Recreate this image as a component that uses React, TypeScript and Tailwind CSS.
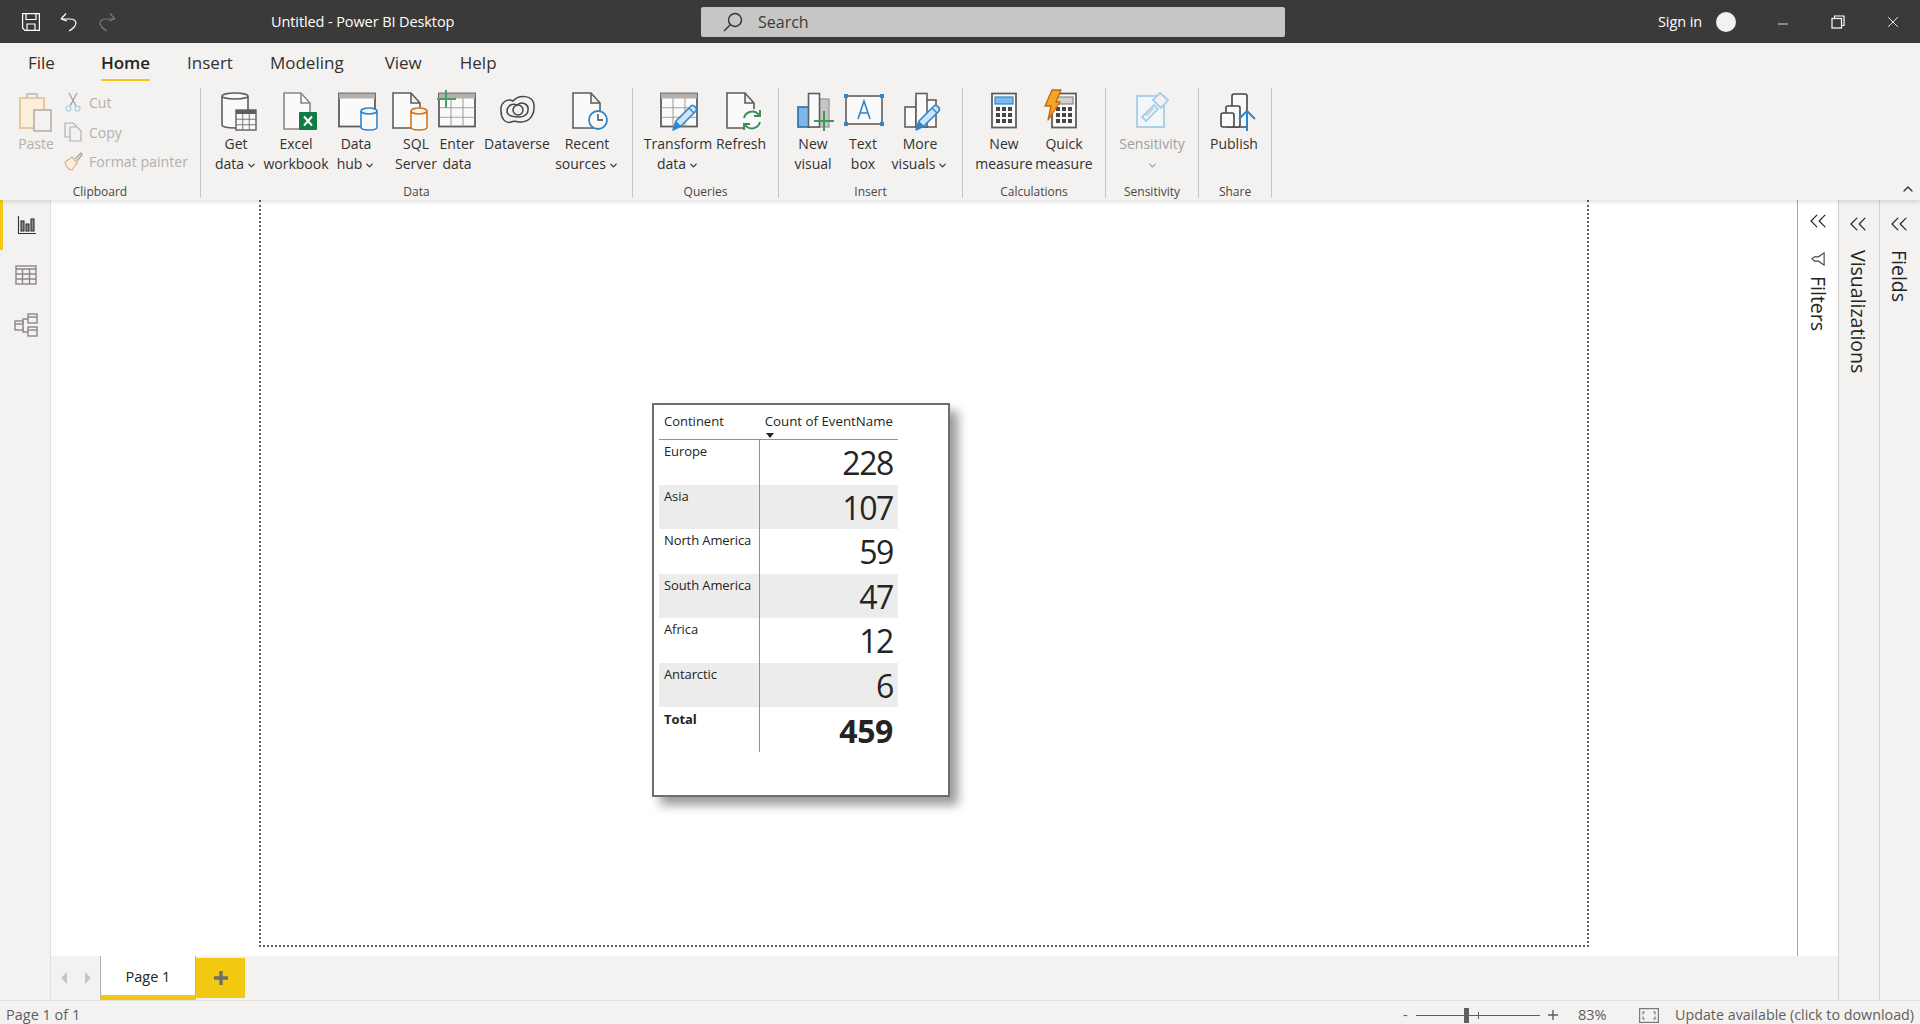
import React from 'react';
import { ChevronsLeft, ChevronDown, ChevronUp, Minus, X } from 'lucide-react';

const G = '#605e5c';

const Cyl = ({ x, y, w, h, c }: { x: number; y: number; w: number; h: number; c: string }) => (
    <g fill="#fafafa" stroke={c} strokeWidth="1.6">
        <path d={`M${x} ${y + 3}V${y + h - 3}C${x} ${y + h + 1} ${x + w} ${y + h + 1} ${x + w} ${y + h - 3}V${y + 3}`} />
        <ellipse cx={x + w / 2} cy={y + 3} rx={w / 2} ry="3" />
    </g>
);

const Page = ({ x, y = 1, w = 27, h = 35 }: { x: number; y?: number; w?: number; h?: number }) => (
    <path
        d={`M${x} ${y}H${x + w - 9}L${x + w} ${y + 10}V${y + h}H${x}ZM${x + w - 9} ${y}V${y + 10}H${x + w}`}
        fill="#fafafa"
        stroke={G}
        strokeWidth="1.6"
    />
);

const Grid = ({ x, y, w, h, cols, rows, c = G }: { x: number; y: number; w: number; h: number; cols: number; rows: number; c?: string }) => (
    <g stroke={c} strokeWidth="1.4" fill="none">
        {Array.from({ length: cols - 1 }).map((_, i) => (
            <path key={i} d={`M${x + ((i + 1) * w) / cols} ${y}V${y + h}`} opacity="0.6" />
        ))}
        {Array.from({ length: rows - 1 }).map((_, i) => (
            <path key={i} d={`M${x} ${y + ((i + 1) * h) / rows}H${x + w}`} opacity="0.6" />
        ))}
    </g>
);

const Pencil = ({ x, y }: { x: number; y: number }) => (
    <g transform={`translate(${x} ${y})`}>
        <path d="M0 25L3 16L18 1C20 -1 25 3 23 6L8 21Z" fill="#cfe4f6" stroke="#2e86cc" strokeWidth="1.6" strokeLinejoin="round" />
        <path d="M0 25L3 16L8 21Z" fill="#2e86cc" />
        <path d="M16 3L21 8" stroke="#2e86cc" strokeWidth="1.4" />
    </g>
);

const Calc = ({ x }: { x: number }) => (
    <g>
        <rect x={x} y="1.5" width="24" height="34" fill="#fafafa" stroke={G} strokeWidth="1.8" />
        {[15, 21, 27].map((y) =>
            [4, 10, 16].map((dx) => <rect key={`${y}-${dx}`} x={x + dx} y={y} width="4" height="4" fill="#484644" />)
        )}
    </g>
);

const icons: Record<string, React.ReactNode> = {
    getData: (
        <>
            <Cyl x={8} y={1} w={26} h={35} c={G} />
            <rect x="22" y="18" width="20" height="20" fill="#fafafa" stroke={G} strokeWidth="1.4" />
            <rect x="22" y="18" width="20" height="4" fill={G} />
            <Grid x={22} y={22} w={20} h={16} cols={3} rows={3} />
        </>
    ),
    excel: (
        <>
            <path d="M10 1H27L36 11V37H10Z" fill="#fafafa" stroke="#8a8886" strokeWidth="1.6" />
            <path d="M27 1V11H36" fill="none" stroke="#8a8886" strokeWidth="1.6" />
            <rect x="25" y="20" width="18" height="18" rx="1" fill="#107c41" />
            <path d="M30 24.5L38 33.5M38 24.5L30 33.5" stroke="#fff" strokeWidth="2" />
        </>
    ),
    dataHub: (
        <>
            <rect x="5" y="1.5" width="36" height="33" fill="#fafafa" stroke={G} strokeWidth="1.8" />
            <rect x="5" y="1.5" width="36" height="5" fill="#b3b0ad" />
            <Cyl x={27} y={16} w={16} h={22} c="#2e86cc" />
        </>
    ),
    sql: (
        <>
            <Page x={-1} />
            <Cyl x={17} y={16} w={16} h={22} c="#d9741c" />
        </>
    ),
    enter: (
        <>
            <rect x="4" y="1.5" width="36" height="33" fill="#fafafa" stroke={G} strokeWidth="1.8" />
            <rect x="4" y="1.5" width="36" height="5" fill="#b3b0ad" />
            <Grid x={4} y={6} w={36} h={29} cols={3} rows={3} c="#8a8886" />
            <path d="M11 -2V16M2 7H21" stroke="#4a9d68" strokeWidth="2" />
        </>
    ),
    dataverse: (
        <g fill="none" stroke="#484644" strokeWidth="1.5">
            <path d="M6 19C5 10 13 6 18 9C24 2 38 3 39 13C40 22 35 30 26 30C21 30 20 28 16 30C10 32 6 26 6 19Z" />
            <path d="M12 19C12 13 18 11 22 13C27 9 34 12 33 18C33 23 28 25 24 25C20 25 12 25 12 19Z" />
            <circle cx="23" cy="18" r="5" />
        </g>
    ),
    recent: (
        <>
            <Page x={8} />
            <circle cx="33" cy="28" r="9" fill="#fafafa" stroke="#2e86cc" strokeWidth="1.8" />
            <path d="M33 22V28H38" fill="none" stroke="#484644" strokeWidth="1.4" />
        </>
    ),
    transform: (
        <>
            <rect x="5" y="1.5" width="36" height="33" fill="#fafafa" stroke={G} strokeWidth="1.8" />
            <rect x="5" y="1.5" width="36" height="5" fill="#b3b0ad" />
            <Grid x={5} y={6} w={36} h={29} cols={3} rows={3} c="#8a8886" />
            <Pencil x={17} y={13} />
        </>
    ),
    refresh: (
        <>
            <Page x={8} />
            <circle cx="33" cy="28" r="11" fill="#fafafa" />
            <path d="M25 26A8.5 8.5 0 0 1 40 23M41 30A8.5 8.5 0 0 1 26 33" fill="none" stroke="#3e8e5a" strokeWidth="2" />
            <path d="M41 18V24H35M25 38V32H31" fill="none" stroke="#3e8e5a" strokeWidth="2" />
        </>
    ),
    newVisual: (
        <>
            <rect x="18" y="7" width="20" height="28" fill="#c8c6c4" stroke="#a19f9d" strokeWidth="1.4" />
            <rect x="7" y="15" width="11" height="20" fill="#7db8ea" stroke="#1f6fb2" strokeWidth="1.6" />
            <rect x="17.5" y="1.5" width="11" height="33.5" fill="#fafafa" stroke={G} strokeWidth="1.6" />
            <path d="M33 19V39M23 29H43" stroke="#3e9a5c" strokeWidth="2" />
        </>
    ),
    textBox: (
        <>
            <rect x="5" y="4" width="36" height="28" fill="#fafafa" stroke={G} strokeWidth="1.6" />
            {[[5, 4], [41, 4], [5, 32], [41, 32]].map(([x, y]) => (
                <rect key={`${x}-${y}`} x={x - 2} y={y - 2} width="4" height="4" fill="#2e86cc" />
            ))}
            <path d="M17 27L23 9L29 27M19 21H27" fill="none" stroke="#2e86cc" strokeWidth="1.6" />
        </>
    ),
    moreVisuals: (
        <>
            <rect x="18" y="8" width="20" height="27" fill="#fafafa" stroke={G} strokeWidth="1.6" />
            <rect x="7" y="15" width="11" height="20" fill="#fafafa" stroke={G} strokeWidth="1.6" />
            <rect x="18" y="1.5" width="11" height="33.5" fill="#fafafa" stroke={G} strokeWidth="1.6" />
            <Pencil x={18} y={13} />
        </>
    ),
    newMeasure: (
        <>
            <Calc x={10} />
            <rect x="13" y="5" width="18" height="7" fill="#7db8ea" stroke="#2e86cc" strokeWidth="1.2" />
        </>
    ),
    quickMeasure: (
        <>
            <Calc x={10} />
            <rect x="13" y="5" width="18" height="7" fill="#d2d0ce" stroke="#8a8886" strokeWidth="1.2" />
            <path d="M10 -2H19L14 10H18L6 28L9 14H3Z" fill="#f5a623" stroke="#c8640f" strokeWidth="1.3" strokeLinejoin="round" />
        </>
    ),
    sensitivity: (
        <g stroke="#a6cde6" fill="none" strokeWidth="1.8">
            <rect x="7" y="4" width="27" height="31" fill="#f3f7fa" />
            <path d="M12 25L24 13L28 17L16 29Z" />
            <path d="M23 8L30 1L38 8L31 16Z" fill="#f3f2f1" />
            <path d="M16 24L24 16" strokeWidth="1.2" />
        </g>
    ),
    publish: (
        <>
            <g fill="#fafafa" stroke="#484644" strokeWidth="1.6" strokeLinejoin="round">
                <rect x="20" y="2" width="15" height="33" rx="2" />
                <rect x="14" y="14" width="14" height="21" rx="2" />
                <rect x="9" y="21" width="13" height="14" rx="2" />
            </g>
            <path d="M35 39V19M27 27L35 19L43 27" fill="none" stroke="#2e86cc" strokeWidth="2" />
        </>
    ),
};

const Icon = ({ name }: { name: string }) => (
    <svg width="44" height="40" viewBox="0 0 44 40" className="overflow-visible shrink-0">
        {icons[name]}
    </svg>
);

interface Btn {
    icon: string;
    lines: string[];
    caret?: boolean;
    box: string; // width + left margin, per button
    muted?: boolean;
}

const groups: { label: string; box: string; buttons: Btn[] }[] = [
    {
        label: 'Data',
        box: 'w-[432px]',
        buttons: [
            { icon: 'getData', lines: ['Get', 'data'], caret: true, box: 'w-[48px] ml-[11px]' },
            { icon: 'excel', lines: ['Excel', 'workbook'], box: 'w-[68px] ml-[2px]' },
            { icon: 'dataHub', lines: ['Data', 'hub'], caret: true, box: 'w-[50px] ml-[1px]' },
            { icon: 'sql', lines: ['SQL', 'Server'], box: 'w-[48px] ml-[11px]' },
            { icon: 'enter', lines: ['Enter', 'data'], box: 'w-[34px]' },
            { icon: 'dataverse', lines: ['Dataverse'], box: 'w-[68px] ml-[9px]' },
            { icon: 'recent', lines: ['Recent', 'sources'], caret: true, box: 'w-[62px] ml-[5px]' },
        ],
    },
    {
        label: 'Queries',
        box: 'w-[146px]',
        buttons: [
            { icon: 'transform', lines: ['Transform', 'data'], caret: true, box: 'w-[68px] ml-[11px]' },
            { icon: 'refresh', lines: ['Refresh'], box: 'w-[54px] ml-[2px]' },
        ],
    },
    {
        label: 'Insert',
        box: 'w-[184px]',
        buttons: [
            { icon: 'newVisual', lines: ['New', 'visual'], box: 'w-[44px] ml-[12px]' },
            { icon: 'textBox', lines: ['Text', 'box'], box: 'w-[40px] ml-[8px]' },
            { icon: 'moreVisuals', lines: ['More', 'visuals'], caret: true, box: 'w-[60px] ml-[7px]' },
        ],
    },
    {
        label: 'Calculations',
        box: 'w-[143px]',
        buttons: [
            { icon: 'newMeasure', lines: ['New', 'measure'], box: 'w-[60px] ml-[11px]' },
            { icon: 'quickMeasure', lines: ['Quick', 'measure'], box: 'w-[60px]' },
        ],
    },
    {
        label: 'Sensitivity',
        box: 'w-[93px]',
        buttons: [{ icon: 'sensitivity', lines: ['Sensitivity', ''], caret: true, muted: true, box: 'w-[68px] ml-[12px]' }],
    },
    {
        label: 'Share',
        box: 'w-[73px]',
        buttons: [{ icon: 'publish', lines: ['Publish'], box: 'w-[54px] ml-[8px]' }],
    },
];

const RibbonButton = ({ b }: { b: Btn }) => (
    <div className={`flex flex-col items-center shrink-0 ${b.box}`}>
        <Icon name={b.icon} />
        <div className={`pt-[2px] text-[14px] leading-[20px] text-center whitespace-nowrap ${b.muted ? 'text-[#a19f9d]' : 'text-[#323130]'}`}>
            {b.lines.map((l, i) => (
                <div key={i} className="flex items-center justify-center h-[20px]">
                    {l}
                    {b.caret && i === b.lines.length - 1 && <ChevronDown size={11} strokeWidth={2.6} className="ml-[2px] mt-[2px]" />}
                </div>
            ))}
        </div>
    </div>
);

const rows = [
    { name: 'Europe', value: '228' },
    { name: 'Asia', value: '107' },
    { name: 'North America', value: '59' },
    { name: 'South America', value: '47' },
    { name: 'Africa', value: '12' },
    { name: 'Antarctic', value: '6' },
];

const TableVisual = () => (
    <div className="absolute left-[391px] top-[203px] w-[298px] h-[394px] bg-white border-2 border-[#6e6e6e] shadow-[8px_8px_10px_rgba(0,0,0,0.4)] pl-[5px]">
        <div className="w-[239px] text-[#252423]">
            <div className="relative h-[35px] flex border-b border-[#5b9fe3] text-[13px]">
                <div className="w-[100px] pl-[5px] pt-[7px]">Continent</div>
                <div className="w-[139px] pr-[5px] pt-[7px] text-right whitespace-nowrap text-[13.3px]">Count of EventName</div>
                <div className="absolute left-[107px] top-[28px] w-0 h-0 border-x-[4px] border-x-transparent border-t-[5px] border-t-[#252423]" />
            </div>
            {rows.map((r, i) => (
                <div key={r.name} className={`flex h-[44.5px] ${i % 2 === 1 ? 'bg-[#ececec]' : 'bg-white'}`}>
                    <div className="w-[101px] border-r border-[#5b9fe3] pl-[5px] pt-[2px] text-[13px] tracking-[-0.1px] whitespace-nowrap">{r.name}</div>
                    <div className="w-[138px] pr-[5px] text-right text-[32px] leading-[46px] tracking-[-1.4px]">{r.value}</div>
                </div>
            ))}
            <div className="flex h-[45px] font-bold">
                <div className="w-[101px] border-r border-[#5b9fe3] pl-[5px] pt-[3px] text-[13px] tracking-[-0.1px]">Total</div>
                <div className="w-[138px] pr-[5px] pt-[1px] text-right text-[32px] leading-[46px] tracking-[-0.4px]">459</div>
            </div>
        </div>
    </div>
);

const SidePanel = ({ title }: { title: string }) => (
    <div className="flex flex-col items-center h-full w-[41px] border-l border-[#d2d0ce] bg-[#f3f2f1] pt-[10px] pr-[2px]">
        <ChevronsLeft size={28} strokeWidth={1} className="text-[#252423]" />
        <div className="[writing-mode:vertical-rl] text-[19.5px] leading-[24px] text-[#252423] mt-[12px]">{title}</div>
    </div>
);

export default function App() {
    return (
        <div className="w-[1920px] h-[1024px] flex flex-col overflow-hidden bg-[#f3f2f1] font-['Open_Sans',sans-serif]">
            {/* Title bar */}
            <div className="h-[43px] bg-[#3b3a39] flex items-center shrink-0 text-white">
                <svg width="18" height="18" viewBox="0 0 18 18" className="ml-[22px]" fill="none" stroke="#fff" strokeWidth="1.2">
                    <path d="M.6.6H17.4V17.4H3L.6 15ZM4 .6V6.5H14V.6M5 17.4V11H13V17.4" />
                </svg>
                <svg width="18" height="20" viewBox="0 0 18 20" className="ml-[20px]" fill="none" stroke="#fff" strokeWidth="1.2">
                    <path d="M1 7L6 1.5M1 7L7 9M1 7H10C18 7 18 14 9 19" />
                </svg>
                <svg width="18" height="20" viewBox="0 0 18 20" className="ml-[20px]" fill="none" stroke="#7a7978" strokeWidth="1.2">
                    <path d="M17 7L12 1.5M17 7L11 9M17 7H8C0 7 0 14 9 19" />
                </svg>
                <div className="ml-[155px] w-[430px] text-[14.5px] tracking-[-0.1px]">Untitled - Power BI Desktop</div>
                <div className="w-[584px] h-[30px] bg-[#c8c6c4] rounded-[2px] flex items-center pl-[22px] text-[#3b3a39]">
                    <svg width="20" height="20" viewBox="0 0 20 20" fill="none" stroke="#323130" strokeWidth="1.4">
                        <circle cx="12" cy="8" r="6.5" />
                        <path d="M7.5 12.5L1 19" />
                    </svg>
                    <span className="ml-[15px] text-[16px]">Search</span>
                </div>
                <div className="ml-[373px] w-[45px] text-[14.5px] tracking-[-0.1px] whitespace-nowrap">Sign in</div>
                <div className="ml-[13px] w-[20px] h-[20px] rounded-full bg-[#f3f2f1]" />
                <Minus size={16} strokeWidth={1.2} className="ml-[39px] mt-[5px]" />
                <svg width="14" height="14" viewBox="0 0 14 14" className="ml-[40px] mt-[1px]" fill="none" stroke="#fff" strokeWidth="1.2">
                    <rect x="1" y="3.5" width="9.5" height="9.5" />
                    <path d="M3.5 3.5V1H13V10.5H10.5" />
                </svg>
                <X size={18} strokeWidth={1.2} className="ml-[39px] mt-[1px]" />
            </div>

            {/* Tabs + ribbon */}
            <div className="relative z-10 h-[157px] shrink-0 bg-[#f3f2f1] shadow-[0_2px_4px_rgba(0,0,0,0.12)]">
                <div className="h-[39px] flex items-center text-[17px] text-[#323130]">
                    <span className="ml-[28px]">File</span>
                    <span className="relative ml-[46px] font-semibold text-[#252423]">
                        Home
                        <span className="absolute left-0 right-0 bottom-[-6px] h-[2px] bg-[#f2c811]" />
                    </span>
                    <span className="ml-[37px]">Insert</span>
                    <span className="ml-[37px]">Modeling</span>
                    <span className="ml-[41px]">View</span>
                    <span className="ml-[38px]">Help</span>
                </div>
                <div className="flex pt-[6px]">
                    {/* Clipboard */}
                    <div className="w-[201px] h-[110px] border-r border-[#c8c6c4] flex flex-col">
                        <div className="flex flex-1 pt-[4px] text-[#b3b0ad] text-[14px]">
                            <div className="w-[60px] flex flex-col items-center ml-[6px] shrink-0">
                                <svg width="36" height="40" viewBox="0 0 36 40" fill="none" className="mr-[4px]">
                                    <path d="M4 6H28V36H4Z" fill="#fbeedb" stroke="#e6c79e" strokeWidth="2" />
                                    <path d="M11 6V2H21V6" stroke="#c8c6c4" strokeWidth="2" />
                                    <rect x="18" y="18" width="17" height="21" fill="#f3f2f1" stroke="#b3b0ad" strokeWidth="1.6" />
                                </svg>
                                <span className="mt-[2px] leading-[20px]">Paste</span>
                            </div>
                            <div className="flex flex-col gap-[10px] -ml-[2px]">
                                <div className="flex items-center h-[20px]">
                                    <svg width="18" height="20" viewBox="0 0 18 20" fill="none" stroke="#a19f9d" strokeWidth="1.2">
                                        <path d="M5 1L12 14M13 1L6 14" />
                                        <circle cx="4.5" cy="16.5" r="2.5" stroke="#a6cde6" />
                                        <circle cx="13.5" cy="16.5" r="2.5" stroke="#a6cde6" />
                                    </svg>
                                    <span className="ml-[7px]">Cut</span>
                                </div>
                                <div className="flex items-center h-[20px]">
                                    <svg width="18" height="20" viewBox="0 0 18 20" fill="#f3f2f1" stroke="#b3b0ad" strokeWidth="1.2">
                                        <path d="M1 1H9L12 4V15H1Z" />
                                        <path d="M6 5H13L17 9V19H6Z" />
                                    </svg>
                                    <span className="ml-[7px]">Copy</span>
                                </div>
                                <div className="flex items-center h-[20px] whitespace-nowrap -ml-[1px]">
                                    <svg width="20" height="20" viewBox="0 0 20 20" fill="#fbeedb" stroke="#d9b48a" strokeWidth="1.2">
                                        <path d="M2 10L9 5L14 11L9 18C6 18 2 14 2 10Z" />
                                        <path d="M12 7L18 1L19 3L14 9" stroke="#a19f9d" />
                                    </svg>
                                    <span className="ml-[6px] text-[14.2px]">Format painter</span>
                                </div>
                            </div>
                        </div>
                        <div className="h-[13px] leading-[13px] text-[12px] text-center text-[#484644]">Clipboard</div>
                    </div>

                    {groups.map((g) => (
                        <div key={g.label} className={`h-[110px] border-r border-[#c8c6c4] flex flex-col shrink-0 ${g.box}`}>
                            <div className="flex flex-1 pt-[4px]">
                                {g.buttons.map((b) => (
                                    <RibbonButton key={b.icon} b={b} />
                                ))}
                            </div>
                            <div className="h-[13px] leading-[13px] text-[12px] text-center text-[#484644]">{g.label}</div>
                        </div>
                    ))}
                </div>
                <ChevronUp size={16} strokeWidth={2} className="absolute right-[4px] bottom-[3px] text-[#323130]" />
            </div>

            {/* Body */}
            <div className="flex h-[800px] shrink-0">
                <div className="w-[51px] shrink-0 border-r border-[#e1dfdd] flex flex-col">
                    <div className="h-[50px] border-l-[3px] border-[#f2c811] flex items-center justify-center">
                        <svg width="20" height="20" viewBox="0 0 20 20" fill="#8a8886" stroke="#323130" strokeWidth="1.1">
                            <path d="M1.5 1V18.5H19" fill="none" />
                            <rect x="4" y="6" width="3" height="10" />
                            <rect x="9" y="9" width="3" height="7" />
                            <rect x="14" y="4" width="3" height="12" />
                        </svg>
                    </div>
                    <div className="h-[50px] flex items-center justify-center pl-[2px]">
                        <svg width="22" height="20" viewBox="0 0 22 20" fill="none" stroke="#8a8886" strokeWidth="1.4">
                            <rect x="1" y="1" width="20" height="18" />
                            <path d="M1 4H21M1 9H21M1 14H21M7.5 4V19M14.5 4V19" />
                        </svg>
                    </div>
                    <div className="h-[50px] flex items-center justify-center pl-[2px]">
                        <svg width="24" height="24" viewBox="0 0 24 24" fill="#f3f2f1" stroke="#8a8886" strokeWidth="1.4">
                            <path d="M9 11V6H14M9 14V19H14" fill="none" />
                            <rect x="1" y="8" width="8" height="9" />
                            <path d="M1 11H9" />
                            <rect x="14" y="1" width="9" height="9" />
                            <path d="M14 4H23" />
                            <rect x="14" y="14" width="9" height="9" />
                            <path d="M14 17H23" />
                        </svg>
                    </div>
                </div>

                <div className="w-[1787px] shrink-0 flex flex-col">
                    <div className="h-[756px] flex bg-white">
                        <div className="relative flex-1">
                            <div className="relative ml-[208px] w-[1330px] h-[747px] border-2 border-t-0 border-dotted border-[#605e5c]">
                                <TableVisual />
                            </div>
                        </div>
                        <div className="w-[42px] border-l border-[#a6a6a6] -mr-px">
                            <div className="flex flex-col items-center h-full pt-[7px] pr-[2px]">
                                <ChevronsLeft size={28} strokeWidth={1} className="text-[#252423]" />
                                <svg width="14" height="14" viewBox="0 0 16 16" className="mt-[17px]" fill="none" stroke="#484644" strokeWidth="1.3">
                                    <path d="M15 1V15L8.5 10.5H4L1 7.5L4 5.5H8.5Z" />
                                </svg>
                                <div className="[writing-mode:vertical-rl] text-[19.5px] leading-[24px] text-[#252423] mt-[10px]">Filters</div>
                            </div>
                        </div>
                    </div>
                    <div className="h-[44px] flex">
                        <div className="w-[49px] flex items-center justify-center gap-[18px] text-[#c8c6c4]">
                            <div className="w-0 h-0 border-y-[6px] border-y-transparent border-r-[6px] border-r-[#c8c6c4]" />
                            <div className="w-0 h-0 border-y-[6px] border-y-transparent border-l-[6px] border-l-[#c8c6c4]" />
                        </div>
                        <div className="w-[96px] bg-white border-x border-[#b3b0ad] border-b-[5px] border-b-[#f2c811] flex items-center justify-center text-[14.5px] text-[#252423] pt-[2px]">
                            Page 1
                        </div>
                        <div className="w-[49px] h-[40px] mt-[2px] bg-[#f2c811] flex items-center justify-center">
                            <svg width="14" height="14" viewBox="0 0 14 14" fill="none" stroke="#6e6e6e" strokeWidth="3.4">
                                <path d="M7 0V14M0 7H14" />
                            </svg>
                        </div>
                    </div>
                </div>

                <SidePanel title="Visualizations" />
                <SidePanel title="Fields" />
            </div>

            {/* Status bar */}
            <div className="h-[24px] shrink-0 border-t border-[#e1dfdd] flex items-center pt-[5px] text-[14.5px] text-[#605e5c]">
                <span className="w-[1403px] pl-[6px]">Page 1 of 1</span>
                <span className="w-[13px]">-</span>
                <div className="relative w-[124px] h-[1px] bg-[#605e5c]">
                    <div className="absolute left-[48px] -top-[7px] w-[5px] h-[15px] bg-[#605e5c]" />
                    <div className="absolute left-[62px] -top-[3px] w-[1px] h-[7px] bg-[#605e5c]" />
                </div>
                <svg width="10" height="10" viewBox="0 0 10 10" className="ml-[8px]" fill="none" stroke="#605e5c" strokeWidth="1.4">
                    <path d="M5 0V10M0 5H10" />
                </svg>
                <span className="ml-[20px] w-[61px]">83%</span>
                <svg width="20" height="15" viewBox="0 0 20 15" fill="none" stroke="#7a7978" strokeWidth="1.2">
                    <rect x=".6" y=".6" width="18.8" height="13.8" />
                    <path d="M6 4H4V6.5M14 4H16V6.5M6 11H4V8.5M14 11H16V8.5" />
                </svg>
                <span className="ml-[16px] whitespace-nowrap text-[14.3px]">Update available (click to download)</span>
            </div>
        </div>
    );
}
